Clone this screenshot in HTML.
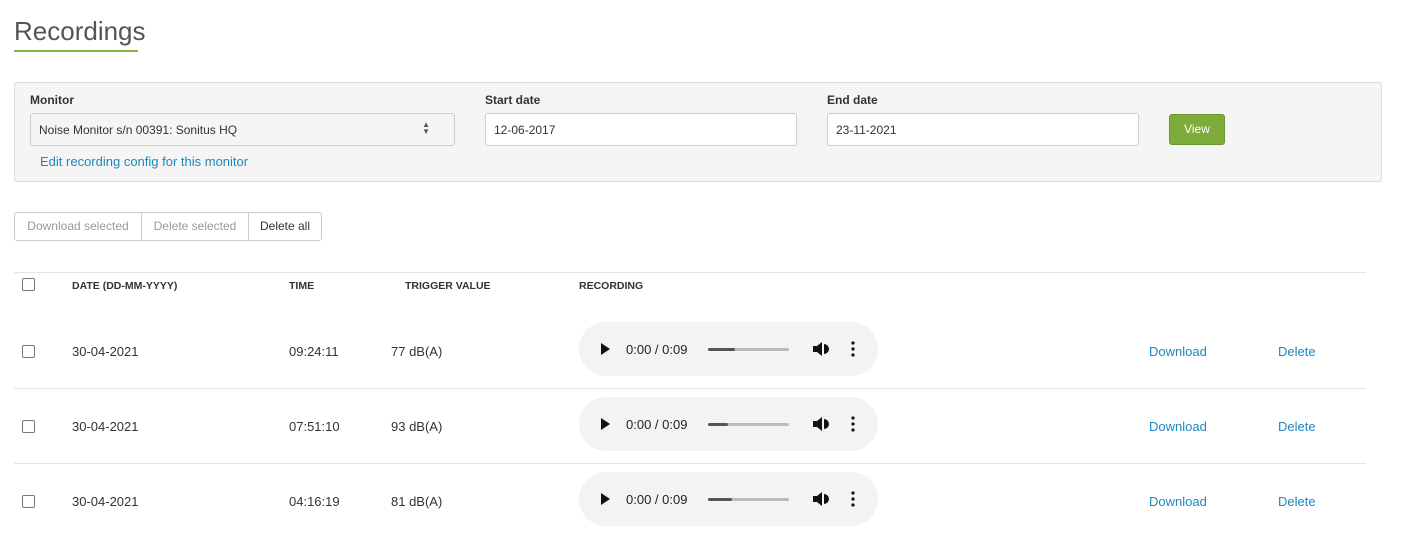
<!DOCTYPE html>
<html><head><style>
*{box-sizing:border-box;margin:0;padding:0}
body{width:1421px;height:550px;background:#fff;font-family:"Liberation Sans",sans-serif;color:#333;position:relative;overflow:hidden}
.a{position:absolute}
h1{position:absolute;left:14px;top:16px;font-weight:normal;font-size:26px;color:#555}
.ul{left:14px;top:50px;width:124px;height:2px;background:#8ab243}
.panel{left:14px;top:82px;width:1368px;height:100px;background:#f5f5f5;border:1px solid #ddd;border-radius:2px}
.lbl{font-size:12px;font-weight:bold;color:#333}
.inp{background:#fff;border:1px solid #ccc;border-radius:3px;height:33px;font-size:12px;padding:9px 8px;color:#333}
.btn{left:1169px;top:114px;width:56px;height:31px;background:#7fab3a;border:1px solid #6a9530;border-radius:3px;color:#fff;font-size:12px;text-align:center;line-height:29px}
.bg{top:212px;height:29px;border:1px solid #ccc;font-size:12px;line-height:27px;text-align:center;background:#fff}
.th{top:280px;font-size:10.5px;font-weight:bold;color:#333}
.line{left:14px;width:1352px;height:1px;background:#e5e5e5}
.cb{width:13px;height:13px;border:1px solid #777;border-radius:2px;background:#fff}
.td{font-size:13px;color:#333}
.lk{font-size:13px;color:#1e87c0}
.pl{left:579px;width:299px;height:54px;border-radius:27px;background:#f1f3f4}
</style></head><body>
<h1>Recordings</h1><div class="a ul"></div>
<div class="a panel"></div>
<div class="a lbl" style="left:30px;top:93px">Monitor</div>
<div class="a inp" style="left:30px;top:113px;width:425px;background:#f5f5f5;font-size:12px">Noise Monitor s/n 00391: Sonitus HQ<span style="position:absolute;right:24px;top:7px;font-size:8px;line-height:7px;color:#555">▲<br>▼</span></div>
<div class="a lk" style="left:40px;top:154px">Edit recording config for this monitor</div>
<div class="a lbl" style="left:485px;top:93px">Start date</div>
<div class="a inp" style="left:485px;top:113px;width:312px">12-06-2017</div>
<div class="a lbl" style="left:827px;top:93px">End date</div>
<div class="a inp" style="left:827px;top:113px;width:312px">23-11-2021</div>
<div class="a btn">View</div>
<div class="a bg" style="left:14px;width:128px;color:#999;border-radius:3px 0 0 3px">Download selected</div>
<div class="a bg" style="left:141px;width:108px;color:#999">Delete selected</div>
<div class="a bg" style="left:248px;width:74px;color:#333;border-radius:0 3px 3px 0">Delete all</div>
<div class="a line" style="top:272px"></div>
<div class="a cb" style="left:22px;top:278px"></div>
<div class="a th" style="left:72px">DATE (DD-MM-YYYY)</div>
<div class="a th" style="left:289px">TIME</div>
<div class="a th" style="left:405px">TRIGGER VALUE</div>
<div class="a th" style="left:579px">RECORDING</div>
<div class="a line" style="top:388px"></div>
<div class="a line" style="top:463px"></div>
<div class="a cb" style="left:22px;top:345px"></div><div class="a td" style="left:72px;top:344px">30-04-2021</div><div class="a td" style="left:289px;top:344px">09:24:11</div><div class="a td" style="left:391px;top:344px">77 dB(A)</div><div class="a lk" style="left:1149px;top:344px">Download</div><div class="a lk" style="left:1278px;top:344px">Delete</div>
<div class="a cb" style="left:22px;top:420px"></div><div class="a td" style="left:72px;top:419px">30-04-2021</div><div class="a td" style="left:289px;top:419px">07:51:10</div><div class="a td" style="left:391px;top:419px">93 dB(A)</div><div class="a lk" style="left:1149px;top:419px">Download</div><div class="a lk" style="left:1278px;top:419px">Delete</div>
<div class="a cb" style="left:22px;top:495px"></div><div class="a td" style="left:72px;top:494px">30-04-2021</div><div class="a td" style="left:289px;top:494px">04:16:19</div><div class="a td" style="left:391px;top:494px">81 dB(A)</div><div class="a lk" style="left:1149px;top:494px">Download</div><div class="a lk" style="left:1278px;top:494px">Delete</div>
<div class="a pl" style="top:322px"><svg width="299" height="54"><path d="M22 21v12l9-6z" fill="#111"/><text x="47" y="32" font-size="13" font-family="Liberation Sans" fill="#222">0:00 / 0:09</text><rect x="129" y="26" width="81" height="3" rx="1.5" fill="#bbb"/><rect x="129" y="26" width="27" height="3" rx="1.5" fill="#555"/><path d="M234 24h4l5-4v14l-5-4h-4z M245 22a5 5 0 0 1 0 10z" fill="#111"/><circle cx="274" cy="21" r="1.6" fill="#111"/><circle cx="274" cy="27" r="1.6" fill="#111"/><circle cx="274" cy="33" r="1.6" fill="#111"/></svg></div>
<div class="a pl" style="top:397px"><svg width="299" height="54"><path d="M22 21v12l9-6z" fill="#111"/><text x="47" y="32" font-size="13" font-family="Liberation Sans" fill="#222">0:00 / 0:09</text><rect x="129" y="26" width="81" height="3" rx="1.5" fill="#bbb"/><rect x="129" y="26" width="20" height="3" rx="1.5" fill="#555"/><path d="M234 24h4l5-4v14l-5-4h-4z M245 22a5 5 0 0 1 0 10z" fill="#111"/><circle cx="274" cy="21" r="1.6" fill="#111"/><circle cx="274" cy="27" r="1.6" fill="#111"/><circle cx="274" cy="33" r="1.6" fill="#111"/></svg></div>
<div class="a pl" style="top:472px"><svg width="299" height="54"><path d="M22 21v12l9-6z" fill="#111"/><text x="47" y="32" font-size="13" font-family="Liberation Sans" fill="#222">0:00 / 0:09</text><rect x="129" y="26" width="81" height="3" rx="1.5" fill="#bbb"/><rect x="129" y="26" width="24" height="3" rx="1.5" fill="#555"/><path d="M234 24h4l5-4v14l-5-4h-4z M245 22a5 5 0 0 1 0 10z" fill="#111"/><circle cx="274" cy="21" r="1.6" fill="#111"/><circle cx="274" cy="27" r="1.6" fill="#111"/><circle cx="274" cy="33" r="1.6" fill="#111"/></svg></div>
</body></html>
